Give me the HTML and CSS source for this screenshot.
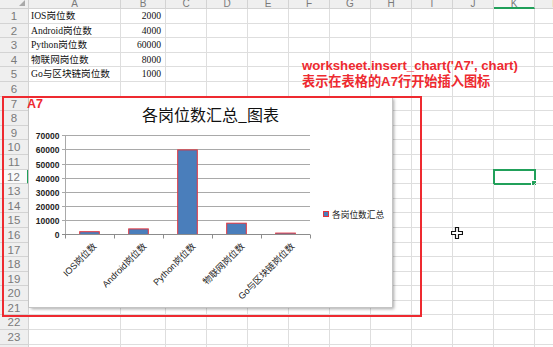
FILE: index.html
```html
<!DOCTYPE html>
<html lang="zh-CN">
<head>
    <meta charset="UTF-8">
    <meta name="viewport" content="width=device-width, initial-scale=1.0">
    <title>各岗位数汇总</title>
    <link rel="stylesheet" href="styles.css">
</head>
<body>
    <div class="page">
        <div class="sheet" id="sheet"></div>

        <div class="chart">
            <svg width="363" height="210" viewBox="0 0 363 210">
                <text class="chart-title" x="181.5" y="24" text-anchor="middle">各岗位数汇总_图表</text>
                <g class="grid">
                    <line x1="33" y1="38.5" x2="281" y2="38.5"/>
                    <line x1="33" y1="52.5" x2="281" y2="52.5"/>
                    <line x1="33" y1="67.5" x2="281" y2="67.5"/>
                    <line x1="33" y1="81.5" x2="281" y2="81.5"/>
                    <line x1="33" y1="95.5" x2="281" y2="95.5"/>
                    <line x1="33" y1="109.5" x2="281" y2="109.5"/>
                    <line x1="33" y1="123.5" x2="281" y2="123.5"/>
                    <line x1="36.5" y1="38.5" x2="36.5" y2="137.5"/>
                </g>
                <g class="y-labels" text-anchor="end">
                    <text x="30.5" y="41.5">70000</text>
                    <text x="30.5" y="55.5">60000</text>
                    <text x="30.5" y="70.5">50000</text>
                    <text x="30.5" y="84.5">40000</text>
                    <text x="30.5" y="98.5">30000</text>
                    <text x="30.5" y="112.5">20000</text>
                    <text x="30.5" y="126.5">10000</text>
                    <text x="30.5" y="140.5">0</text>
                </g>
                <g class="bars">
                    <rect x="50.7" y="134.7" width="19.6" height="2.8"/>
                    <rect x="99.7" y="131.9" width="19.6" height="5.6"/>
                    <rect x="148.7" y="52.9" width="19.6" height="84.6"/>
                    <rect x="197.7" y="126.2" width="19.6" height="11.3"/>
                    <rect x="246.7" y="136.1" width="19.6" height="1.4"/>
                </g>
                <g class="axis">
                    <line x1="33" y1="137.5" x2="281" y2="137.5"/>
                    <line x1="36.5" y1="137.5" x2="36.5" y2="141.5"/>
                    <line x1="85.5" y1="137.5" x2="85.5" y2="141.5"/>
                    <line x1="134.5" y1="137.5" x2="134.5" y2="141.5"/>
                    <line x1="183.5" y1="137.5" x2="183.5" y2="141.5"/>
                    <line x1="232.5" y1="137.5" x2="232.5" y2="141.5"/>
                    <line x1="281.5" y1="137.5" x2="281.5" y2="141.5"/>
                </g>
                <g class="x-labels" text-anchor="end">
                    <text transform="translate(68 150) rotate(-45)">IOS岗位数</text>
                    <text transform="translate(118 150) rotate(-45)">Android岗位数</text>
                    <text transform="translate(167 150) rotate(-45)">Python岗位数</text>
                    <text transform="translate(216 150) rotate(-45)">物联网岗位数</text>
                    <text transform="translate(266 150) rotate(-45)">Go与区块链岗位数</text>
                </g>
                <rect class="legend-key" x="294.5" y="114.5" width="5" height="5"/>
                <text class="legend-text" x="303" y="120.5">各岗位数汇总</text>
            </svg>
        </div>

        <div class="mark-box"></div>
        <div class="mark-label">A7</div>
        <div class="note">
            <div>worksheet.insert_chart('A7', chart)</div>
            <div>表示在表格的A7行开始插入图标</div>
        </div>

        <svg class="cursor" width="12" height="12" viewBox="0 0 12 12">
            <path d="M4.5 .5h3v4h4v3h-4v4h-3v-4h-4v-3h4z"/>
        </svg>
    </div>

    <script>
        const columns = ['A', 'B', 'C', 'D', 'E', 'F', 'G', 'H', 'I', 'J', 'K', 'L'];
        const data = {
            1: ['IOS岗位数', 2000],
            2: ['Android岗位数', 4000],
            3: ['Python岗位数', 60000],
            4: ['物联网岗位数', 8000],
            5: ['Go与区块链岗位数', 1000]
        };
        const activeRow = 12;
        const activeCol = 'K';

        const sheet = document.getElementById('sheet');

        function cell(className, text) {
            const div = document.createElement('div');
            div.className = className;
            if (text !== undefined) div.textContent = text;
            sheet.appendChild(div);
            return div;
        }

        cell('corner');
        columns.forEach(col => {
            cell(col === activeCol ? 'col-head active' : 'col-head', col);
        });

        for (let row = 1; row <= 24; row++) {
            cell(row === activeRow ? 'row-head active' : 'row-head', row);
            columns.forEach(col => {
                let cls = 'cell';
                let text;
                if (data[row] && col === 'A') {
                    text = data[row][0];
                } else if (data[row] && col === 'B') {
                    cls += ' num';
                    text = data[row][1];
                }
                if (row === activeRow && col === activeCol) cls += ' selected';
                cell(cls, text);
            });
        }
    </script>
</body>
</html>
```

FILE: styles.css
```css
html, body {
    margin: 0;
    padding: 0;
    background: #fff;
    overflow: hidden;
}
.page {
    position: relative;
    width: 553px;
    height: 347px;
    overflow: hidden;
}
.sheet {
    display: grid;
    grid-template-columns: 29px 92px 45px repeat(9, 41px) 41px;
    grid-template-rows: 9px;
    grid-auto-rows: 14.6px;
    font-family: "Liberation Serif", "Noto Sans CJK SC", serif;
    font-size: 9.6px;
    color: #111;
}
.corner {
    position: relative;
    background: #efefef;
    border-right: 1px solid #cfcfcf;
    border-bottom: 1px solid #cfcfcf;
}
.corner::after {
    content: "";
    position: absolute;
    right: 3px;
    bottom: 2px;
    border-left: 6px solid transparent;
    border-bottom: 6px solid #a9a9a9;
}
.col-head, .row-head {
    background: #efefef;
    color: #7a7a7a;
    font-family: "Liberation Sans", sans-serif;
    font-size: 11px;
    text-align: center;
    border-right: 1px solid #d3d3d3;
    border-bottom: 1px solid #d3d3d3;
    overflow: hidden;
}
.col-head {
    font-size: 10px;
    line-height: 8px;
}
.col-head.active {
    background: #f7f7f7;
    border-bottom: 2px solid #21a05a;
}
.row-head {
    line-height: 14.6px;
    font-size: 11.5px;
}
.row-head.active {
    background: #fafafa;
    border-right: 2px solid #21a05a;
}
.cell {
    position: relative;
    border-right: 1px solid #dedede;
    border-bottom: 1px solid #dedede;
    line-height: 14.6px;
    padding-left: 2px;
    white-space: nowrap;
}
.cell.num {
    text-align: right;
    padding: 0 4px 0 0;
}
.cell.selected {
    outline: 2px solid #21a05a;
    outline-offset: -1px;
}
.cell.selected::after {
    content: "";
    position: absolute;
    right: -3px;
    bottom: -3px;
    width: 4px;
    height: 4px;
    background: #21a05a;
    border: 1px solid #fff;
}

/* chart object */
.chart {
    position: absolute;
    left: 29px;
    top: 97px;
    width: 363px;
    height: 210px;
    background: #fff;
    box-shadow: 0 0 0 1px #c4c4c4, 2px 2px 3px rgba(0, 0, 0, 0.35);
}
.chart svg {
    display: block;
}
.chart-title {
    font-family: "Noto Sans CJK SC", sans-serif;
    font-size: 16px;
    fill: #111;
}
.grid line {
    stroke: #a9a9a9;
    stroke-width: 1;
}
.axis line {
    stroke: #8c8c8c;
    stroke-width: 1;
}
.y-labels text {
    font-family: "Liberation Sans", sans-serif;
    font-size: 8.5px;
    font-weight: bold;
    fill: #222;
}
.bars rect, .legend-key {
    fill: #4a7ebb;
    stroke: #e3343c;
    stroke-width: 1;
}
.x-labels text {
    font-family: "Liberation Sans", "Noto Sans CJK SC", sans-serif;
    font-size: 9px;
    fill: #222;
}
.legend-text {
    font-family: "Noto Sans CJK SC", sans-serif;
    font-size: 8.7px;
    fill: #222;
}

/* annotations */
.mark-box {
    position: absolute;
    left: 2px;
    top: 96px;
    width: 416px;
    height: 217px;
    border: 2px solid #ee2a30;
}
.mark-label {
    position: absolute;
    left: 27px;
    top: 97px;
    font-family: "Liberation Sans", sans-serif;
    font-weight: bold;
    font-size: 12.5px;
    line-height: 14px;
    color: #ee2a30;
}
.note {
    position: absolute;
    left: 302px;
    top: 58px;
    font-family: "Liberation Sans", "Noto Sans CJK SC", sans-serif;
    font-weight: bold;
    font-size: 13.2px;
    line-height: 15.5px;
    color: #ee2a30;
    white-space: nowrap;
}
.cursor {
    position: absolute;
    left: 451px;
    top: 227px;
}
.cursor path {
    fill: #fff;
    stroke: #111;
    stroke-width: 1.2;
}
```
